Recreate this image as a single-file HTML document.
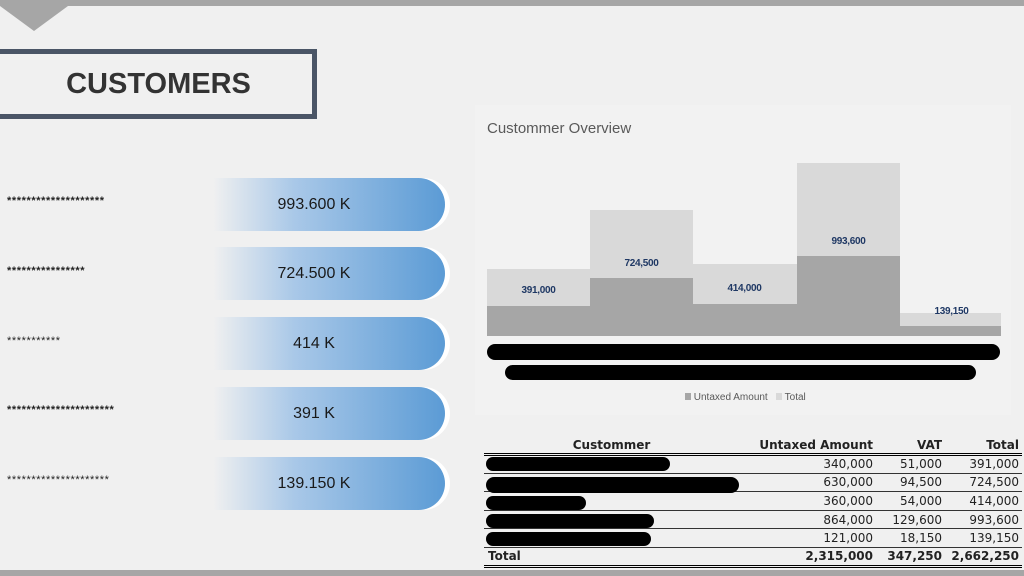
<!DOCTYPE html>
<html><head><style>
*{margin:0;padding:0;box-sizing:border-box}
body{width:1024px;height:576px;background:#f0f0f0;position:relative;overflow:hidden;font-family:"Liberation Sans",sans-serif}
.abs{position:absolute}
.pill{position:absolute;left:213px;width:232px;height:53px;border-radius:0 27px 27px 0;background:linear-gradient(90deg,rgba(91,155,213,0) 0%,#a9c8e8 35%,#5b9bd5 100%);box-shadow:5px 0 0 #fff;font-size:16px;color:#1a1a1a;text-align:center;line-height:53px;padding-right:30px}
.star{position:absolute;left:7px;font-size:11px;font-weight:bold;color:#222;letter-spacing:0.6px}
.lbl{position:absolute;font-size:10px;font-weight:bold;color:#1f3864;width:103px;text-align:center;letter-spacing:-0.3px}
.blk{position:absolute;background:#000;border-radius:8px}
td{font-family:"DejaVu Sans",sans-serif;font-size:12px;height:18.6px;text-align:right;padding-right:3px;color:#222}
</style></head><body>
<div class="abs" style="left:0;top:0;width:1024px;height:6px;background:#a6a6a6"></div>
<div class="abs" style="left:0;top:6px;width:0;height:0;border-left:34px solid transparent;border-right:34px solid transparent;border-top:25px solid #a6a6a6;left:0"></div>
<div class="abs" style="left:0;top:570px;width:1024px;height:6px;background:#a6a6a6"></div>
<div class="abs" style="left:-6px;top:49px;width:323px;height:70px;border:5px solid #4a5566;font-size:29px;font-weight:bold;color:#333;text-align:center;line-height:60px;padding-left:6px">CUSTOMERS</div>

<div class="star" style="top:195px">********************</div>
<div class="star" style="top:265px">****************</div>
<div class="star" style="top:335px;font-weight:normal">***********</div>
<div class="star" style="top:404px">**********************</div>
<div class="star" style="top:474px;font-weight:normal">*********************</div>
<div class="pill" style="top:178px">993.600 K</div>
<div class="pill" style="top:247px">724.500 K</div>
<div class="pill" style="top:317px">414 K</div>
<div class="pill" style="top:387px">391 K</div>
<div class="pill" style="top:457px">139.150 K</div>

<div class="abs" style="left:475px;top:105px;width:536px;height:310px;background:#f2f2f2"></div>
<div class="abs" style="left:487px;top:120px;font-size:15px;color:#595959">Custommer Overview</div>
<div class="abs" style="left:487px;top:269px;width:103px;height:67px;background:#d9d9d9"></div>
<div class="abs" style="left:590px;top:210px;width:103px;height:126px;background:#d9d9d9"></div>
<div class="abs" style="left:693px;top:264px;width:104px;height:72px;background:#d9d9d9"></div>
<div class="abs" style="left:797px;top:163px;width:103px;height:173px;background:#d9d9d9"></div>
<div class="abs" style="left:900px;top:313px;width:101px;height:23px;background:#d9d9d9"></div>
<div class="abs" style="left:487px;top:306px;width:103px;height:30px;background:#a6a6a6"></div>
<div class="abs" style="left:590px;top:278px;width:103px;height:58px;background:#a6a6a6"></div>
<div class="abs" style="left:693px;top:304px;width:104px;height:32px;background:#a6a6a6"></div>
<div class="abs" style="left:797px;top:256px;width:103px;height:80px;background:#a6a6a6"></div>
<div class="abs" style="left:900px;top:326px;width:101px;height:10px;background:#a6a6a6"></div>
<div class="lbl" style="left:487px;top:285px">391,000</div>
<div class="lbl" style="left:590px;top:258px">724,500</div>
<div class="lbl" style="left:693px;top:283px">414,000</div>
<div class="lbl" style="left:797px;top:236px">993,600</div>
<div class="lbl" style="left:900px;top:306px">139,150</div>
<div class="blk" style="left:487px;top:344px;width:513px;height:16px"></div>
<div class="blk" style="left:505px;top:365px;width:471px;height:15px"></div>
<div class="abs" style="left:685px;top:392px;font-size:10px;color:#595959"><span style="display:inline-block;width:6px;height:7px;background:#a6a6a6"></span> Untaxed Amount &nbsp; <span style="display:inline-block;width:6px;height:7px;background:#d9d9d9"></span> Total</div>

<table class="abs" style="left:484px;top:436px;width:538px;border-collapse:collapse">
<tr style="border-bottom:3px double #000"><td style="text-align:center;font-weight:bold;width:258px">Custommer</td><td style="font-weight:bold;width:134px">Untaxed Amount</td><td style="font-weight:bold;width:69px">VAT</td><td style="font-weight:bold">Total</td></tr>
<tr style="border-bottom:1px solid #333"><td></td><td>340,000</td><td>51,000</td><td>391,000</td></tr>
<tr style="border-bottom:1px solid #333"><td></td><td>630,000</td><td>94,500</td><td>724,500</td></tr>
<tr style="border-bottom:1px solid #333"><td></td><td>360,000</td><td>54,000</td><td>414,000</td></tr>
<tr style="border-bottom:1px solid #333"><td></td><td>864,000</td><td>129,600</td><td>993,600</td></tr>
<tr style="border-bottom:1px solid #333"><td></td><td>121,000</td><td>18,150</td><td>139,150</td></tr>
<tr style="border-bottom:3px double #000"><td style="text-align:left;font-weight:bold;padding-left:4px">Total</td><td style="font-weight:bold">2,315,000</td><td style="font-weight:bold">347,250</td><td style="font-weight:bold">2,662,250</td></tr>
</table>
<div class="blk" style="left:486px;top:457px;width:184px;height:14px"></div>
<div class="blk" style="left:486px;top:477px;width:253px;height:16px"></div>
<div class="blk" style="left:486px;top:496px;width:100px;height:14px"></div>
<div class="blk" style="left:486px;top:514px;width:168px;height:14px"></div>
<div class="blk" style="left:486px;top:532px;width:165px;height:14px"></div>
</body></html>
